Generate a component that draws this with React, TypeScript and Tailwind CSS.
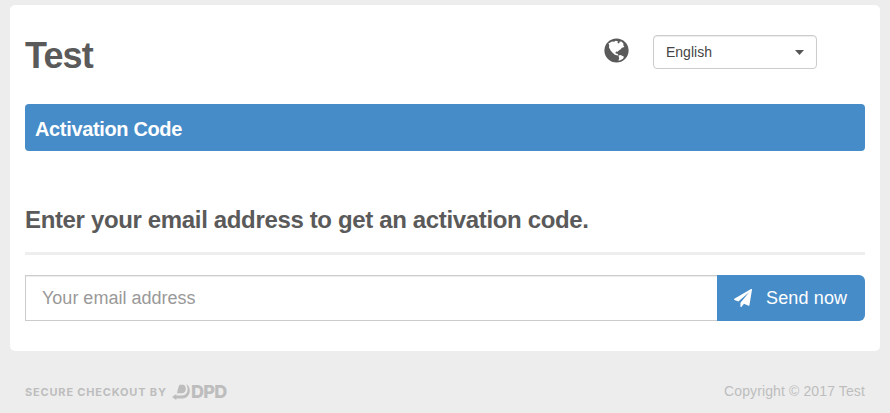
import { useState } from "react";

function GlobeIcon() {
  return (
    <svg width="25" height="25" viewBox="0 0 25 25" aria-hidden="true">
      <circle cx="12.5" cy="12.5" r="12.1" fill="#5a5a5a" />
      <path
        d="M4.4 5.6 L8 3.6 L10.2 3.8 L11.6 2.8 L14 3.2 L13.4 4.4 L14.6 5.4 L15.6 4.8 L15.4 3.8 L17.4 3.4 L19.4 5.4 L19.4 7.4 L20.4 9 L18 9.8 L16.4 11.4 L14.8 12.6 L13.6 13.8 L12.2 13.6 L11.4 14.4 L12 15.8 L13.2 15.6 L14.4 17 L13.6 17.5 L10.8 16.8 L8.6 14.8 L6.6 12.4 L5 9.6 L5.2 7 Z"
        fill="#fff"
      />
      <path d="M14.4 17.6 L16.6 17.1 L20 18.7 L19 20.8 L15.8 22.6 L14.4 22.4 L15.2 20.2 Z" fill="#fff" />
    </svg>
  );
}

function SendIcon() {
  return (
    <svg width="18" height="18" viewBox="0 0 1792 1792" fill="currentColor" aria-hidden="true">
      <path d="M1764 11q33 24 27 64l-256 1536q-5 29-32 45-14 8-31 8-11 0-24-5l-453-185-242 295q-18 23-49 23-13 0-22-4-19-7-30.5-23.500t-11.500-36.500v-349l864-1059-1069 925-395-162q-37-14-40-55-2-40 32-59l1664-960q15-9 32-9 20 0 36 11z" />
    </svg>
  );
}

function DpdMark() {
  return (
    <svg width="19" height="16" viewBox="0 0 19 16" fill="#bdbdbd" aria-hidden="true">
      <path d="M7.500 0.800 H11.500 C15.200 2.500 14.300 8.900 10.500 9.200 H5 C5.800 5.500 6.300 3 7.500 0.800 Z" />
      <path d="M14.200 0 C20.400 3.400 18.400 14.600 10.300 14.600 H4.300 V16 L0 12.900 L4.300 9.900 V11.500 H10.300 C15.600 11.300 17 5 14.200 0 Z" />
    </svg>
  );
}

export default function App() {
  const [email, setEmail] = useState("");

  return (
    <div className="h-[413px] bg-[#ededed] px-2.5 pt-[5px] font-['Liberation_Sans',Arial,sans-serif] text-[#5a5a5a]">
      <main className="h-[346px] rounded-[5px] bg-white px-[15px] pt-[30px]">
        <header className="flex h-[69px] items-start justify-between">
          <h1 className="text-[36px] leading-[41px] font-bold tracking-[-0.9px]">Test</h1>
          <div className="mr-12 flex items-start gap-6">
            <div className="pt-[3px]">
              <GlobeIcon />
            </div>
            <button className="flex h-[34px] w-[164px] items-center justify-between rounded-[4px] border border-[#ccc] px-3 text-[14px] text-[#444] shadow-[inset_0_1px_1px_rgba(0,0,0,0.075)]">
              <span>English</span>
              <svg width="9" height="5" viewBox="0 0 9 5" fill="#555" aria-hidden="true">
                <path d="M0 0 H9 L4.500 5 Z" />
              </svg>
            </button>
          </div>
        </header>

        <div className="flex h-[47px] items-center rounded-[4px] bg-[#468cc8] px-2.5 pt-0.5 text-[20px] font-bold tracking-[-0.35px] text-white">
          Activation Code
        </div>

        <h2 className="mt-[54px] h-[50px] border-b-[3px] border-[#eee] pt-px text-[24px] leading-7 font-bold tracking-[-0.35px]">
          Enter your email address to get an activation code.
        </h2>

        <form className="mt-5 flex h-[46px]" onSubmit={(e) => e.preventDefault()}>
          <input
            type="email"
            value={email}
            onChange={(e) => setEmail(e.target.value)}
            placeholder="Your email address"
            className="min-w-0 flex-1 border border-r-0 border-[#ccc] px-4 text-[18px] shadow-[inset_0_1px_1px_rgba(0,0,0,0.075)] outline-none placeholder:text-[#999]"
          />
          <button className="flex w-[148px] items-center gap-[14px] rounded-r-[6px] bg-[#468cc8] pl-[17px] text-[18px] tracking-[0.15px] text-white">
            <SendIcon />
            <span>Send now</span>
          </button>
        </form>
      </main>

      <footer className="flex h-[62px] items-center justify-between px-[15px] pt-[19px] text-[#bdbdbd]">
        <div className="flex items-center">
          <span className="w-[147px] pt-0.5 font-['Inter',sans-serif] text-[11px] font-bold tracking-[0.820px] whitespace-nowrap">
            SECURE CHECKOUT BY
          </span>
          <DpdMark />
          <span className="font-['Inter',sans-serif] text-[18px] leading-5 font-extrabold tracking-[-0.800px]">DPD</span>
        </div>
        <span className="text-[14px] tracking-[0.12px]">Copyright © 2017 Test</span>
      </footer>
    </div>
  );
}
